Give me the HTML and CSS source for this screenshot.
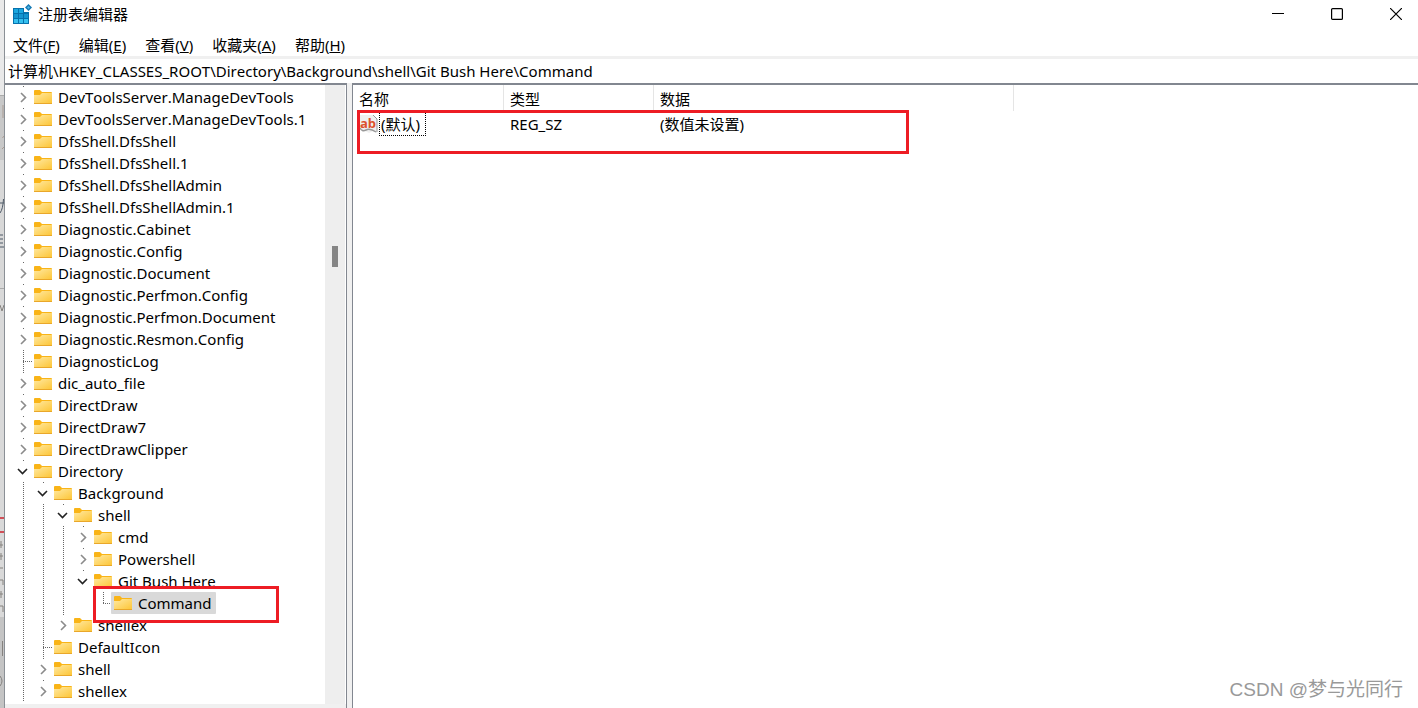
FILE: index.html
```html
<!DOCTYPE html>
<html lang="zh-CN">
<head>
<meta charset="utf-8">
<title>注册表编辑器</title>
<link rel="stylesheet" href="styles.css">
</head>
<body>
<svg class="defs" aria-hidden="true">
  <defs>
    <linearGradient id="fold" x1="0" y1="0" x2="1" y2="1"><stop offset="0" stop-color="#ffe9a2"/><stop offset="1" stop-color="#fdc638"/></linearGradient>
    <symbol id="folder" viewBox="0 0 18 14"><path d="M0 1Q0 0 1 0H6L8 2H17Q18 2 18 3V13H0Z" fill="#f9b417"/><path d="M0 5H6L8 3H18V13H0Z" fill="url(#fold)"/><path d="M0 13H18V14H0Z" fill="#e9a72a"/></symbol>
    <symbol id="closed" viewBox="0 0 20 20"><path d="M8 6L12.500 10.500L8 15" fill="none" stroke="#8b8b8b" stroke-width="1.600"/></symbol>
    <symbol id="open" viewBox="0 0 20 20"><path d="M5 8L9.500 12.500L14 8" fill="none" stroke="#222" stroke-width="1.600"/></symbol>
  </defs>
</svg>
<div class="screen">
  <aside class="backdrop" aria-hidden="true">
    <svg class="backdrop-art" width="4" height="708"><path d="M0 0H4V95H0Z" fill="#e9e9e9"/><path d="M0 96H4V160H0Z" fill="#c8c8c8"/><path d="M0 160H4V288H0Z" fill="#d8d8d8"/><path d="M0 289H4V617H0Z" fill="#d9d9d9"/><path d="M0 617H4V708H0Z" fill="#c4c4c4"/><path d="M0 95.500H4M0 288.500H4" stroke="#aaa"/><path d="M0 518H4M0 532H4" stroke="#d05058" stroke-width="2"/><path d="M3 105V118M2.500 138L4 136M2 149L4 147" fill="none" stroke="#a89c94"/><path d="M0 203H4M3.500 199Q3 209 0 213M0 235H3M0 239H3M0 243H3M0 247H4" fill="none" stroke="#4c5866"/><path d="M0 305L2 311L4 305M0 545H3M1 541V548M0 556H3M1 553V560M0 568H3M0 580H3V585M0 594H3M1 591V598M0 606H3V612M2.500 641V656M0 676Q4 681 0 686" fill="none" stroke="#85827f"/></svg>
  </aside>
  <main class="window">
    <header class="titlebar">
      <svg class="app-icon" viewBox="0 0 20 20"><path d="M1 4H12V8H17V20H1Z" fill="#0672ad"/><path d="M2 5H6V9H2ZM7 5H11V9H7Z" fill="#1ba7df"/><path d="M2 10H6V14H2ZM7 10H11V14H7ZM12 10H16V14H12Z" fill="#1595d0"/><path d="M2 15H6V19H2ZM7 15H11V19H7ZM12 15H16V19H12Z" fill="#35c0ef"/><path d="M16.500 0L20 3.500L16.500 7L13 3.500Z" fill="#1679b4"/><path d="M16.500 2L18 3.500L16.500 5L15 3.500Z" fill="#55b9e6"/></svg>
      <h1 class="title">注册表编辑器</h1>
      <div class="win-btns">
        <button class="win-btn" aria-label="最小化"><svg width="12" height="12"><path d="M0 5.500H12" stroke="#000"/></svg></button>
        <button class="win-btn" aria-label="最大化"><svg width="12" height="12"><rect x=".6" y=".6" width="10.800" height="10.800" rx="1" fill="none" stroke="#000" stroke-width="1.200"/></svg></button>
        <button class="win-btn" aria-label="关闭"><svg width="12" height="12"><path d="M0 0L12 12M12 0L0 12" stroke="#000" stroke-width="1.200"/></svg></button>
      </div>
    </header>
    <nav class="menubar">
      <button class="menu">文件(<u>F</u>)</button><button class="menu">编辑(<u>E</u>)</button><button class="menu">查看(<u>V</u>)</button><button class="menu">收藏夹(<u>A</u>)</button><button class="menu">帮助(<u>H</u>)</button>
    </nav>
    <input class="address" aria-label="地址" value="计算机\HKEY_CLASSES_ROOT\Directory\Background\shell\Git Bush Here\Command">
    <div class="panes">
      <section class="left">
        <div class="tree-area">
          <div class="tree" id="tree"></div>
          <div class="vscroll"><div class="thumb"></div></div>
        </div>
        <div class="hscroll"></div>
      </section>
      <section class="right">
        <table class="values">
          <colgroup><col class="c-name"><col class="c-type"><col class="c-data"><col></colgroup>
          <thead><tr><th>名称</th><th>类型</th><th>数据</th><th class="rest"></th></tr></thead>
          <tbody><tr><td><div class="value"><svg class="ab-icon" viewBox="0 0 20 20"><path d="M1 1H14L18 5V19L14 17L10 19L6 17L1 16V1Z" fill="#efefef"/><path d="M14 1L18 5V18" fill="none" stroke="#999"/><path d="M1 14Q3 18 7 16T17 18" fill="none" stroke="#999" stroke-width="1.500"/><text x="1" y="14" class="ab">ab</text></svg><span class="focus">(默认)</span></div></td><td>REG_SZ</td><td>(数值未设置)</td><td></td></tr></tbody>
        </table>
        <div class="mark mark-value"></div>
        <div class="watermark">CSDN @梦与光同行</div>
      </section>
    </div>
  </main>
</div>
<script src="tree.js"></script>
</body>
</html>
```
FILE: styles.css
```css
* { box-sizing: border-box; }
body { margin: 0; font: 15px/22px "Noto Sans", "Noto Sans CJK SC", sans-serif; font-kerning: none; color: #000; background: #fff; }
button, input { font: inherit; font-kerning: none; color: inherit; border: 0; background: none; padding: 0; margin: 0; }
.defs { position: absolute; width: 0; height: 0; }
.screen { display: flex; height: 100vh; overflow: hidden; }
.backdrop { flex: 0 0 5px; background: #d4d4d4; border-right: 1px solid #8b9096; overflow: hidden; }
.backdrop-art { display: block; }
.window { flex: 1; min-width: 0; display: flex; flex-direction: column; background: #fff; }
.titlebar { display: flex; align-items: center; height: 28px; padding-left: 7px; }
.app-icon { width: 20px; height: 20px; }
.title { flex: 1; margin: 0 0 0 6px; font-size: 15px; font-weight: 400; }
.win-btns { display: flex; gap: 15px; }
.win-btn { width: 44px; height: 28px; display: flex; align-items: center; justify-content: center; }
.menubar { display: flex; gap: 19px; height: 31px; padding: 6px 8px 0; border-bottom: 3px solid #f0f0f0; }
.menu { height: 22px; }
.address { width: 100%; height: 24px; padding: 0 3px 2px; outline: 0; }
.panes { flex: 1; min-height: 0; display: flex; gap: 5px; background: #f0f0f0; }
.left, .right { border-top: 2px solid #828790; background: #fff; position: relative; }
.left { flex: 0 0 342px; border-right: 1px solid #828790; display: flex; flex-direction: column; }
.right { flex: 1; min-width: 0; border-left: 1px solid #828790; }
.tree-area { flex: 1; min-height: 0; display: flex; }
.tree { flex: 1; padding: 1px 0 0 8px; overflow: hidden; }
.vscroll { width: 20px; margin-right: 1px; background: #eee; }
.thumb { width: 6px; height: 21px; margin: 161px 0 0 7px; background: #858585; }
.hscroll { height: 4px; background: #f0f0f0; }
.row { display: flex; height: 22px; align-items: center; white-space: nowrap; }
.cell { width: 20px; height: 22px; flex: none; background: no-repeat 10px 0 / 1px 22px; }
.dots { background-image: repeating-linear-gradient(#666 0 1px, transparent 1px 2px); }
.half { background-size: 1px 11px; }
.leaf { display: flex; align-items: center; }
.leaf::after { content: ""; width: 9px; height: 1px; margin-left: 10px; background: repeating-linear-gradient(90deg, #666 0 1px, transparent 1px 2px); }
.toggle { display: block; width: 20px; height: 20px; margin: 1px 0; background: #fff; }
.toggle svg, .node svg { display: block; }
.node { position: relative; display: flex; align-items: center; height: 22px; gap: 3px; margin-left: -2px; padding: 0 1px 0 3px; border-radius: 1px; }
.node span { padding: 0 3px; }
.selected { background: #d9d9d9; }
.mark { position: absolute; border: 3px solid #ed1c24; pointer-events: none; }
.mark-key { left: -18px; top: -6px; width: 186px; height: 37px; z-index: 2; }
.mark-value { left: 4px; top: 25px; width: 552px; height: 44px; }
.values { width: 100%; table-layout: fixed; border-collapse: separate; border-spacing: 0; }
.c-name { width: 151px; } .c-type { width: 150px; } .c-data { width: 360px; }
th { height: 26px; padding: 2px 6px 0; text-align: left; font-weight: 400; border-right: 1px solid #e5e5e5; }
th.rest { border: 0; }
td { height: 26px; padding: 0 6px; }
.value { display: flex; align-items: center; }
.ab-icon { width: 20px; height: 20px; flex: none; overflow: visible; }
.ab { font: bold 13px "Open Sans", sans-serif; fill: #dc512c; }
.focus { border: 1px dotted #000; padding: 0 5px 0 1px; }
.watermark { position: absolute; right: 15px; bottom: 5px; font: 19px/26px "Liberation Sans", "Noto Sans CJK SC", sans-serif; color: #999; }
```
FILE: tree.js
```js
// Each entry: depth, name, state (+ collapsed, - expanded, . leaf), last sibling, depths whose guide line has ended
const keys = [
  [0, 'DevToolsServer.ManageDevTools', '+'], [0, 'DevToolsServer.ManageDevTools.1', '+'],
  [0, 'DfsShell.DfsShell', '+'], [0, 'DfsShell.DfsShell.1', '+'],
  [0, 'DfsShell.DfsShellAdmin', '+'], [0, 'DfsShell.DfsShellAdmin.1', '+'],
  [0, 'Diagnostic.Cabinet', '+'], [0, 'Diagnostic.Config', '+'], [0, 'Diagnostic.Document', '+'],
  [0, 'Diagnostic.Perfmon.Config', '+'], [0, 'Diagnostic.Perfmon.Document', '+'], [0, 'Diagnostic.Resmon.Config', '+'],
  [0, 'DiagnosticLog', '.'], [0, 'dic_auto_file', '+'], [0, 'DirectDraw', '+'], [0, 'DirectDraw7', '+'],
  [0, 'DirectDrawClipper', '+'], [0, 'Directory', '-'], [1, 'Background', '-'], [2, 'shell', '-'],
  [3, 'cmd', '+'], [3, 'Powershell', '+'], [3, 'Git Bush Here', '-', true], [4, 'Command', '.', true, [3]],
  [2, 'shellex', '+', true], [1, 'DefaultIcon', '.'], [1, 'shell', '+'], [1, 'shellex', '+', true]
];
document.getElementById('tree').innerHTML = keys.map(([depth, name, state, last, ended = []]) => {
  let cells = '';
  for (let d = 0; d < depth; d++) cells += `<div class="cell${ended.includes(d) ? '' : ' dots'}"></div>`;
  cells += state === '.'
    ? `<div class="cell dots leaf${last ? ' half' : ''}"></div>`
    : `<div class="cell dots${last ? ' half' : ''}"><button class="toggle" aria-label="${name}"><svg width="20" height="20"><use href="#${state === '+' ? 'closed' : 'open'}"/></svg></button></div>`;
  const sel = name === 'Command';
  return `<div class="row">${cells}<div class="node${sel ? ' selected' : ''}"><svg width="18" height="14"><use href="#folder"/></svg><span>${name}</span>${sel ? '<div class="mark mark-key"></div>' : ''}</div></div>`;
}).join('');
```
